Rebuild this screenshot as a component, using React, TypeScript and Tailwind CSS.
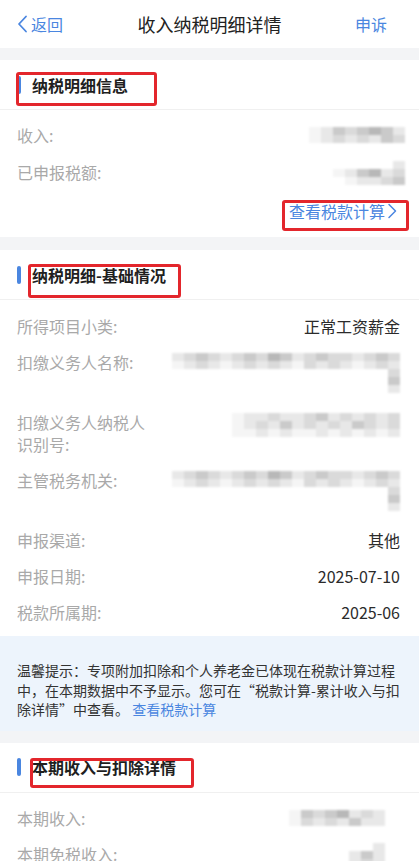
import React from 'react'

const shades = [
  'bg-[#f5f5f5]',
  'bg-[#e8e8e8]',
  'bg-[#dadada]',
  'bg-[#cacaca]',
  'bg-[#b8b8b8]',
]

// pixel mosaic used for the masked values
function Mosaic({ rows }: { rows: string[] }) {
  return (
    <div className="flex flex-col items-end blur-[1.2px]">
      {rows.map((r, i) => (
        <div key={i} className="flex">
          {r.split('').map((c, j) =>
            c === ' ' ? (
              <div key={j} className="w-[12px] h-[8px]" />
            ) : (
              <div key={j} className={`w-[12px] h-[8px] ${shades[Number(c)]}`} />
            ),
          )}
        </div>
      ))}
    </div>
  )
}

function SectionHeader({ title }: { title: string }) {
  return (
    <div className="h-[50px] flex items-center border-b border-[#f0f0f0] pl-[17px]">
      <div className="w-[4px] h-[18px] rounded-full bg-[#4a86e0]" />
      <span className="ml-[11px] text-[16px] font-bold text-[#1f1f1f]">{title}</span>
    </div>
  )
}

function Row({ label, children }: { label: React.ReactNode; children?: React.ReactNode }) {
  return (
    <div className="flex justify-between items-start leading-[22px] text-[16px]">
      <div className="text-[#a9a9a9] shrink-0">{label}</div>
      <div className="text-[#2b2b2b] text-right">{children}</div>
    </div>
  )
}

function RedBox({ className }: { className: string }) {
  return <div className={`absolute border-[3px] border-[#e3262c] rounded-[3px] ${className}`} />
}

export default function App() {
  return (
    <div
      className="relative w-[419px] min-h-[861px] bg-[#f3f4f6] overflow-hidden"
      style={{ fontFamily: '"Noto Sans CJK SC", "Noto Sans", sans-serif' }}
    >
      {/* nav */}
      <div className="h-[48px] bg-white flex items-center justify-between px-[17px]">
        <div className="flex items-center text-[#4a86e0] text-[16px] w-[70px]">
          <svg width="11" height="18" viewBox="0 0 11 18" fill="none">
            <path d="M9 1.5L2 9l7 7.5" stroke="#4a86e0" strokeWidth="1.8" strokeLinecap="round" strokeLinejoin="round" />
          </svg>
          <span className="ml-[3px]">返回</span>
        </div>
        <div className="text-[18px] text-[#222]">收入纳税明细详情</div>
        <div className="w-[70px] flex justify-end pr-[15px] text-[16px] text-[#4a86e0]">申诉</div>
      </div>

      <div className="h-[12px]" />

      {/* card 1 */}
      <div className="bg-white">
        <SectionHeader title="纳税明细信息" />
        <div className="pl-[17px] pr-[14px] pt-[14px] pb-[15px] flex flex-col gap-[15px]">
          <Row label="收入:">
            <div className="pt-[3px]">
              <Mosaic rows={['01323431', '01212132']} />
            </div>
          </Row>
          <Row label="已申报税额:">
            <Mosaic rows={['      1', ' 013412', '  01123']} />
          </Row>
          <div className="flex justify-end items-center pr-[7px] text-[16px] leading-[22px] text-[#4a86e0]">
            <span>查看税款计算</span>
            <svg width="12" height="18" viewBox="0 0 12 18" fill="none" className="ml-[1px]">
              <path d="M3 2.5L9.5 9 3 15.5" stroke="#4a86e0" strokeWidth="1.5" strokeLinecap="round" strokeLinejoin="round" />
            </svg>
          </div>
        </div>
      </div>

      <div className="h-[13px]" />

      {/* card 2 */}
      <div className="bg-white">
        <SectionHeader title="纳税明细-基础情况" />
        <div className="pl-[17px] pr-[19px] pt-[15px] pb-[13px] flex flex-col gap-[14px]">
          <Row label="所得项目小类:">正常工资薪金</Row>
          <Row label="扣缴义务人名称:">
            <div className="h-[46px] pt-[2px]">
              <Mosaic rows={['1232123243123221232', '0121012121021210121', '                  2', '                  3', '                  1']} />
            </div>
          </Row>
          <Row
            label={
              <>
                扣缴义务人纳税人
                <br />
                识别号:
              </>
            }
          >
            <div className="pt-[2px]">
              <Mosaic rows={['01121123121212', '01213121213212', '00101001010101']} />
            </div>
          </Row>
          <Row label="主管税务机关:">
            <div className="h-[46px] pt-[2px]">
              <Mosaic rows={['1232123243123221232', '0121012121021210121', '                  2', '                  3', '                  1']} />
            </div>
          </Row>
          <Row label="申报渠道:">其他</Row>
          <Row label="申报日期:">2025-07-10</Row>
          <Row label="税款所属期:">2025-06</Row>
        </div>
      </div>

      {/* tip */}
      <div className="bg-[#edf4fc] px-[17px] pt-[25px] pb-[11px] text-[14px] leading-[19.5px] text-[#333]">
        温馨提示：专项附加扣除和个人养老金已体现在税款计算过程中，在本期数据中不予显示。您可在“税款计算-累计收入与扣除详情”中查看。 <span className="text-[#4a86e0]">查看税款计算</span>
      </div>

      <div className="h-[12px]" />

      {/* card 3 */}
      <div className="bg-white">
        <SectionHeader title="本期收入与扣除详情" />
        <div className="pl-[17px] pr-[34px] pt-[14px] pb-[15px] flex flex-col gap-[14px]">
          <Row label="本期收入:">
            <div className="pt-[3px]">
              <Mosaic rows={['03234121', '02121311']} />
            </div>
          </Row>
          <Row label="本期免税收入:">
            <Mosaic rows={['    1', '  131', '  121']} />
          </Row>
        </div>
      </div>

      {/* annotation boxes */}
      <RedBox className="left-[16px] top-[72px] w-[141px] h-[34px]" />
      <RedBox className="left-[282px] top-[200px] w-[127px] h-[31px]" />
      <RedBox className="left-[28px] top-[264px] w-[153px] h-[34px]" />
      <RedBox className="left-[30px] top-[758px] w-[164px] h-[30px]" />
    </div>
  )
}
